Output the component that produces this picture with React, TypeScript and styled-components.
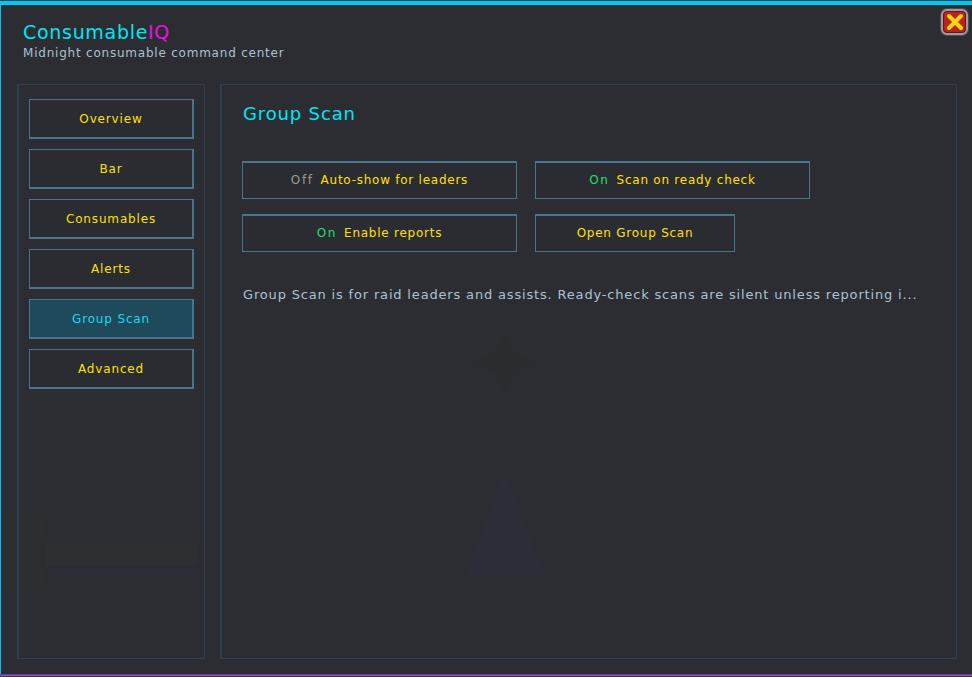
import styled, { createGlobalStyle } from "styled-components";

const GlobalStyle = createGlobalStyle`
    html, body {
        margin: 0;
        padding: 0;
        background: #2c2d33;
    }
`;

const Window = styled.div`
    position: relative;
    box-sizing: border-box;
    width: 972px;
    height: 677px;
    overflow: hidden;
    display: flex;
    flex-direction: column;
    background: #2c2d33;
    border-top: 1px solid #3a4048;
    font-family: "DejaVu Sans", sans-serif;
`;

const TopLine = styled.div`
    height: 4px;
    flex-shrink: 0;
    background: #00c8f5;
`;

const Frame = styled.div`
    position: relative;
    flex: 1;
    display: flex;
    flex-direction: column;
    min-height: 0;
    padding: 0 15px 15px 16px;
    border-left: 1px solid #00bfff;
`;

const BottomLine = styled.div`
    height: 3px;
    flex-shrink: 0;
    background: linear-gradient(#b5179e 0 1px, #5a6fb0 1px 2px, #3a3a40 2px);
`;

const Header = styled.header`
    height: 79px;
    box-sizing: border-box;
    padding: 16px 0 0 6px;
    flex-shrink: 0;
`;

const Logo = styled.h1`
    margin: 0;
    font-size: 19px;
    line-height: 22px;
    font-weight: 400;
    letter-spacing: 0.7px;
    color: #00e5f5;
`;

const LogoAccent = styled.span`
    color: #f010e0;
`;

const Subtitle = styled.div`
    margin-top: 3px;
    font-size: 12px;
    line-height: 14px;
    letter-spacing: 0.78px;
    color: #a9c2d0;
`;

const Body = styled.div`
    position: relative;
    flex: 1;
    display: flex;
    gap: 15px;
    min-height: 0;
`;

const Sidebar = styled.nav`
    box-sizing: border-box;
    width: 188px;
    padding: 14px 10px 0 10px;
    display: flex;
    flex-direction: column;
    gap: 10px;
    border: 2px solid #2a424f;
    border-width: 1px 1px 1px 2px;
`;

const NavButton = styled.button<{ $active?: boolean }>`
    box-sizing: border-box;
    width: 165px;
    height: 40px;
    padding: 0;
    background: ${({ $active }) => ($active ? "#1e4a5c" : "#2b2c32")};
    border: 1px solid #4a748c;
    border-width: 1px 2px 2px 1px;
    font-family: inherit;
    font-size: 12px;
    letter-spacing: 0.85px;
    color: ${({ $active }) => ($active ? "#19d8ee" : "#ffe100")};
`;

const Main = styled.main`
    flex: 1;
    box-sizing: border-box;
    padding: 17px 22px 0 21px;
    border: 1px solid #2a424f;
    border-left-width: 2px;
`;

const Title = styled.h2`
    margin: 0;
    font-size: 18px;
    line-height: 24px;
    font-weight: 400;
    letter-spacing: 0.85px;
    color: #00e5f5;
`;

const Actions = styled.div`
    margin: 35px 0 0 -1px;
    display: grid;
    grid-template-columns: 275px 275px;
    column-gap: 18px;
    row-gap: 15px;
    justify-content: start;
`;

const ActionButton = styled.button<{ $narrow?: boolean }>`
    box-sizing: border-box;
    width: ${({ $narrow }) => ($narrow ? "200px" : "275px")};
    height: 38px;
    padding: 0 0 2px;
    background: #2b2c32;
    border: 2px solid #4a748c;
    border-width: 2px 1px 1px 1px;
    font-family: inherit;
    font-size: 12px;
    letter-spacing: 0.75px;
    color: #ffe100;
`;

const State = styled.span<{ $on?: boolean }>`
    margin-right: 7px;
    letter-spacing: 1.6px;
    color: ${({ $on }) => ($on ? "#1ee06c" : "#9c9c9c")};
`;

const Note = styled.p`
    margin: 34px 0 0;
    font-size: 13px;
    line-height: 18px;
    letter-spacing: 0.83px;
    white-space: nowrap;
    color: #a9c2d0;
`;

const CloseButton = styled.button`
    position: absolute;
    top: 8px;
    right: 4px;
    width: 27px;
    height: 26px;
    padding: 0;
    display: flex;
    align-items: center;
    justify-content: center;
    background: #c0201c;
    border: 2px solid #9a9da1;
    border-radius: 6px;
    box-shadow: 0 0 0 1px #4a4c50, inset 0 0 0 1px #6b1510;
`;

const Watermark = styled.svg`
    position: absolute;
    top: 0;
    left: 0;
    pointer-events: none;
`;

const navItems = ["Overview", "Bar", "Consumables", "Alerts", "Group Scan", "Advanced"];

export default function App() {
    return (
        <>
            <GlobalStyle />
            <Window>
                <Watermark width="972" height="677" viewBox="0 0 972 677">
                    <path d="M505 330 L515 352 L537 362 L515 372 L505 395 L495 372 L472 362 L495 352 Z" fill="#2b2c30" />
                    <path d="M505 470 L545 575 L465 575 Z" fill="#2c2d37" />
                    <rect x="1" y="512" width="41" height="78" fill="#2d2e32" />
                    <rect x="45" y="542" width="152" height="23" fill="#2d3033" />
                    <rect x="46" y="568" width="151" height="9" fill="#2b2d36" />
                </Watermark>
                <TopLine />
                <Frame>
                    <Header>
                        <Logo>
                            Consumable<LogoAccent>IQ</LogoAccent>
                        </Logo>
                        <Subtitle>Midnight consumable command center</Subtitle>
                    </Header>
                    <Body>
                        <Sidebar>
                            {navItems.map((item) => (
                                <NavButton key={item} $active={item === "Group Scan"}>
                                    {item}
                                </NavButton>
                            ))}
                        </Sidebar>
                        <Main>
                            <Title>Group Scan</Title>
                            <Actions>
                                <ActionButton>
                                    <State>Off</State>Auto-show for leaders
                                </ActionButton>
                                <ActionButton>
                                    <State $on>On</State>Scan on ready check
                                </ActionButton>
                                <ActionButton>
                                    <State $on>On</State>Enable reports
                                </ActionButton>
                                <ActionButton $narrow>Open Group Scan</ActionButton>
                            </Actions>
                            <Note>Group Scan is for raid leaders and assists. Ready-check scans are silent unless reporting i...</Note>
                        </Main>
                    </Body>
                </Frame>
                <BottomLine />
                <CloseButton aria-label="Close">
                    <svg width="18" height="18" viewBox="0 0 18 18">
                        <path d="M3 3 L15 15 M15 3 L3 15" stroke="#f7d80e" strokeWidth="4" strokeLinecap="round" />
                    </svg>
                </CloseButton>
            </Window>
        </>
    );
}
